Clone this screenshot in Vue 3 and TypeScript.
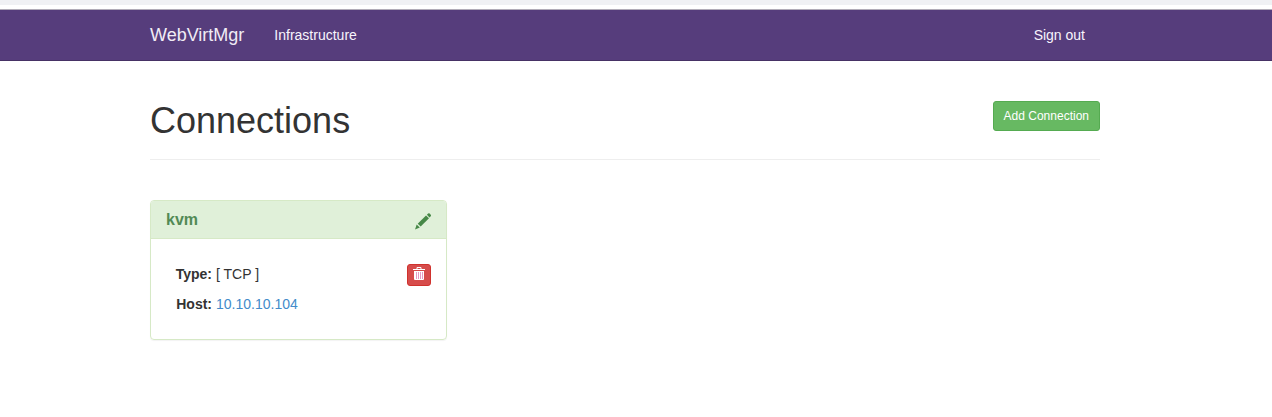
<script setup lang="ts">
interface Connection {
  name: string
  type: string
  host: string
}

const connections: Connection[] = [{ name: 'kvm', type: 'TCP', host: '10.10.10.104' }]
</script>

<template>
  <div class="page">
    <div class="strip"></div>
    <header class="navbar">
      <nav class="container nav">
        <a class="brand" href="#">WebVirtMgr</a>
        <a class="link" href="#">Infrastructure</a>
        <a class="link signout" href="#">Sign out</a>
      </nav>
    </header>
    <main class="content">
      <div class="container">
        <div class="heading">
          <h1>Connections</h1>
          <button type="button" class="add">Add Connection</button>
        </div>
        <div class="cards">
          <section v-for="c in connections" :key="c.name" class="card">
            <div class="card-head">
              <h2><a href="#">{{ c.name }}</a></h2>
              <button type="button" class="edit" aria-label="Edit connection">
                <svg width="16" height="17" viewBox="0 0 16 17" fill="currentColor">
                  <path d="M11.9 1.8 13.1.6q.8-.7 1.6 0l1 1.1q.6.7 0 1.5l-1.2 1.2z" />
                  <path d="M11 2.4 14 5.3 5.7 13.6 2.7 10.7z" />
                  <path d="M1.7 11.5 4.8 14.5 0 16.4z" />
                </svg>
              </button>
            </div>
            <div class="card-body">
              <dl>
                <dt>Type:</dt>
                <dd>[ {{ c.type }} ]</dd>
                <dt>Host:</dt>
                <dd><a href="#">{{ c.host }}</a></dd>
              </dl>
              <button type="button" class="remove" aria-label="Delete connection">
                <svg width="12" height="13" viewBox="0 0 12 13">
                  <path d="M4 2V.5h4V2" fill="none" stroke="#fff" />
                  <path d="M0 2h12v1H0z" fill="#fff" />
                  <path d="M1 4h10v8q0 1-1 1H2q-1 0-1-1z" fill="#fff" />
                  <path d="M3.5 5v7M5.5 5v7M7.5 5v7M9.5 5v7" fill="none" stroke="#e79bc4" />
                </svg>
              </button>
            </div>
          </section>
        </div>
      </div>
    </main>
  </div>
</template>

<style>
body {
  margin: 0;
  background: #fff;
}
</style>

<style scoped>
.page {
  font: 14px/20px "Liberation Sans", Arial, sans-serif;
  color: #333;
}
.page * {
  box-sizing: border-box;
}
a {
  color: #428bca;
  text-decoration: none;
}
button {
  font-family: inherit;
  cursor: pointer;
}
svg {
  display: block;
}
.strip {
  height: 9px;
  background: #fff;
  border-top: 5px solid #f0f1f4;
}
.navbar,
.content {
  padding-right: 22px;
}
.navbar {
  background: #563d7c;
  border-top: 1px solid #b1acb8;
  border-bottom: 1px solid #463265;
}
.container {
  max-width: 950px;
  margin: 0 auto;
}
.nav {
  display: flex;
  align-items: center;
  height: 50px;
}
.brand {
  margin-right: 30px;
  font-size: 18px;
  color: #f0ecf5;
}
.link {
  color: #f8f5fc;
}
.signout {
  margin-left: auto;
  padding-right: 15px;
}
.heading {
  display: flex;
  justify-content: space-between;
  align-items: flex-start;
  padding: 40px 0 19px;
  border-bottom: 1px solid #eee;
}
h1 {
  margin: 0;
  font-size: 36px;
  font-weight: normal;
  line-height: 39px;
}
.add {
  height: 30px;
  padding: 0 10px;
  font-size: 12px;
  line-height: 18px;
  color: #fff;
  background: #67b962;
  border: 1px solid #55ab51;
  border-radius: 3px;
}
.cards {
  display: grid;
  grid-template-columns: repeat(auto-fill, 297px);
  gap: 29px;
  padding: 40px 0 20px;
}
.card {
  border: 1px solid #d6e9c6;
  border-radius: 4px;
  box-shadow: 0 1px 1px rgba(0, 0, 0, 0.05);
}
.card-head {
  display: flex;
  justify-content: space-between;
  align-items: center;
  height: 38px;
  padding: 0 15px;
  background: #e0f0d9;
  border-bottom: 1px solid #d6e9c6;
  border-radius: 3px 3px 0 0;
}
h2 {
  margin: 0;
  font-size: 16px;
  line-height: 18px;
}
h2 a {
  color: #528a55;
}
.edit {
  padding: 3px 0 0;
  color: #468847;
  background: none;
  border: 0;
}
.card-body {
  display: flex;
  justify-content: space-between;
  align-items: flex-start;
  padding: 25px 15px;
}
dl {
  display: grid;
  grid-template-columns: 46px auto;
  gap: 10px 4px;
  margin: 0;
}
dt {
  font-weight: bold;
  text-align: right;
}
dd {
  margin: 0;
}
.remove {
  width: 24px;
  height: 22px;
  padding: 0 5px 3px;
  background: #d64c4b;
  border: 1px solid #d0322d;
  border-radius: 3px;
}
</style>
